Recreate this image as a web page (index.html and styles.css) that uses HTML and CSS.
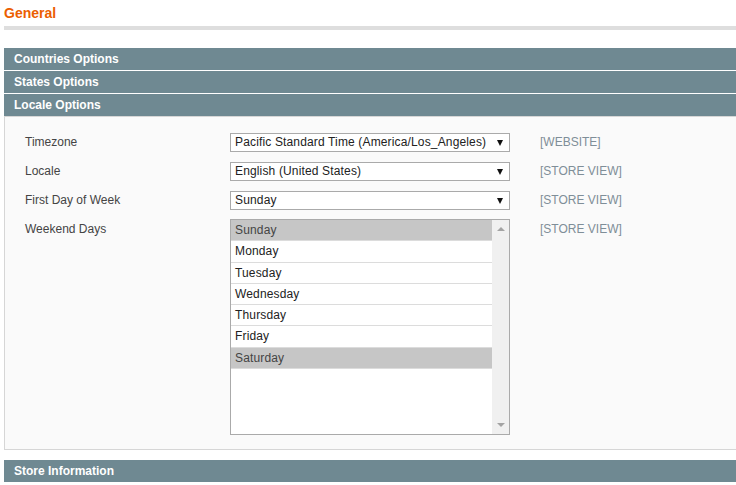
FILE: index.html
```html
<!DOCTYPE html>
<html lang="en">
<head>
<meta charset="utf-8">
<title>General</title>
<link rel="stylesheet" href="styles.css">
</head>
<body>
<div class="page">
  <h1 class="title">General</h1>

  <div class="section-head">Countries Options</div>
  <div class="section-head">States Options</div>
  <div class="section-head open">Locale Options</div>

  <div class="panel">
    <div class="row">
      <div class="label">Timezone</div>
      <div class="select"><span>Pacific Standard Time (America/Los_Angeles)</span><i class="caret"></i></div>
      <div class="scope">[WEBSITE]</div>
    </div>
    <div class="row">
      <div class="label">Locale</div>
      <div class="select"><span>English (United States)</span><i class="caret"></i></div>
      <div class="scope">[STORE VIEW]</div>
    </div>
    <div class="row">
      <div class="label">First Day of Week</div>
      <div class="select"><span>Sunday</span><i class="caret"></i></div>
      <div class="scope">[STORE VIEW]</div>
    </div>
    <div class="row tall">
      <div class="label">Weekend Days</div>
      <div class="multi">
        <ul class="options">
          <li class="selected">Sunday</li>
          <li>Monday</li>
          <li>Tuesday</li>
          <li>Wednesday</li>
          <li>Thursday</li>
          <li>Friday</li>
          <li class="selected">Saturday</li>
        </ul>
        <div class="scrollbar">
          <i class="arrow-up"></i>
          <i class="arrow-down"></i>
        </div>
      </div>
      <div class="scope">[STORE VIEW]</div>
    </div>
  </div>

  <div class="section-head">Store Information</div>
</div>
</body>
</html>
```

FILE: styles.css
```css
html, body {
  margin: 0;
  padding: 0;
  background: #ffffff;
  overflow: hidden;
}

body {
  font-family: "Liberation Sans", Arial, sans-serif;
  font-size: 12px;
  color: #333333;
}

.page {
  width: 740px;
  padding-left: 4px;
}

.title {
  margin: 0 0 18px 0;
  padding: 4px 0 4px 0;
  font-size: 14px;
  line-height: 18px;
  font-weight: bold;
  color: #eb5e00;
  border-bottom: 4px solid #dedede;
}

.section-head {
  height: 22px;
  line-height: 22px;
  padding-left: 10px;
  background: #6f8992;
  color: #ffffff;
  font-weight: bold;
  font-size: 12px;
  margin-bottom: 1px;
}

.section-head.open {
  margin-bottom: 0;
}

.panel {
  background: #fafafa;
  border: 1px solid #d6d6d6;
  padding: 16px 0 14px 20px;
  margin-bottom: 10px;
  display: flex;
  flex-direction: column;
  gap: 10px;
}

.row {
  display: flex;
  align-items: flex-start;
}

.row.tall {
  margin-top: -1px;
}

.row.tall .label,
.row.tall .scope {
  padding-top: 1px;
}

.label {
  width: 205px;
  line-height: 19px;
  color: #444444;
}

.select {
  box-sizing: border-box;
  width: 280px;
  height: 19px;
  border: 1px solid #aaaaaa;
  background: #ffffff;
  display: flex;
  align-items: center;
  justify-content: space-between;
  padding: 0 6px 0 4px;
  color: #222222;
  line-height: 17px;
  letter-spacing: 0.15px;
}

.caret {
  width: 0;
  height: 0;
  border-left: 3.5px solid transparent;
  border-right: 3.5px solid transparent;
  border-top: 6px solid #111111;
}

.scope {
  margin-left: 30px;
  line-height: 19px;
  color: #7f8e98;
}

.multi {
  box-sizing: border-box;
  width: 280px;
  height: 216px;
  border: 1px solid #aaaaaa;
  background: #ffffff;
  display: flex;
}

.options {
  list-style: none;
  margin: 0;
  padding: 0;
  flex: 1;
}

.options li {
  height: 20.3px;
  line-height: 20px;
  padding-left: 4px;
  border-bottom: 1px solid #dcdcdc;
  color: #222222;
  letter-spacing: 0.15px;
}

.options li.selected {
  background: #c6c6c6;
  color: #444444;
}

.scrollbar {
  width: 17px;
  background: #f0f0f0;
  display: flex;
  flex-direction: column;
  justify-content: space-between;
  align-items: center;
  padding: 7px 0 7px 0;
}

.arrow-up {
  width: 0;
  height: 0;
  border-left: 4px solid transparent;
  border-right: 4px solid transparent;
  border-bottom: 4px solid #a3a3a3;
}

.arrow-down {
  width: 0;
  height: 0;
  border-left: 4px solid transparent;
  border-right: 4px solid transparent;
  border-top: 4px solid #a3a3a3;
}
```
